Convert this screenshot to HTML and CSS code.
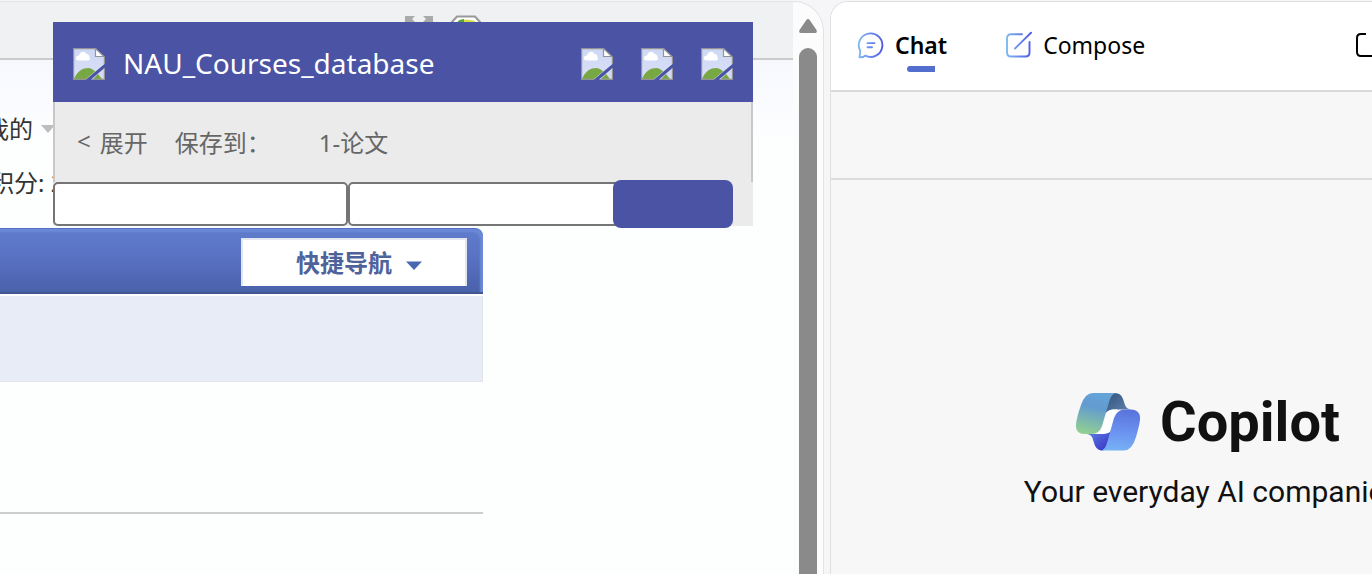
FILE: index.html
```html
<!DOCTYPE html>
<html lang="zh-CN">
<head>
<meta charset="utf-8">
<title>NAU_Courses_database</title>
<link rel="stylesheet" href="styles.css">
</head>
<body>
<svg class="defs" aria-hidden="true">
  <defs>
    <linearGradient id="sky" x1="0" y1="0" x2="0" y2="1"><stop offset="0" stop-color="#ccd8f4"/><stop offset="1" stop-color="#dcdff8"/></linearGradient>
    <linearGradient id="stroke" gradientUnits="userSpaceOnUse" x1="1" y1="0" x2="27" y2="0"><stop offset="0" stop-color="#81bdf0"/><stop offset="1" stop-color="#4f55e6"/></linearGradient>
    <symbol id="missing" viewBox="0 0 32 32">
      <path d="M.5.5H23L31.500 9V16L13 31.500H.5Z" fill="url(#sky)"/>
      <path d="M31.500 20V31.500H18Z" fill="#d6daf5"/>
      <path d="M5 12.500a2.500 2.500 0 0 1 1-5 4 4 0 0 1 7.500-1.500 3 3 0 0 1 3 3.500 1.800 1.800 0 0 1-1 3Z" fill="#fff"/>
      <path d="M1 31C4 23 10 20 15 20q4 0 7 3.500L13 31Z" fill="#78a843"/>
      <path d="M20 31l5-5 4 5Z" fill="#78a843"/>
      <path d="M22.500.8V8.500H31Z" fill="#fff"/>
      <path d="M13 31.400H.6V.6H22.500L31.400 9V16M22.500.6V8.500H31.400M31.400 20V31.400H20" fill="none" stroke="#949494" stroke-width="1.200"/>
    </symbol>
  </defs>
</svg>
<div class="window">
  <main class="browser">
    <div class="page">
      <header class="topbar">
        <svg class="top-icon" viewBox="0 0 30 30" aria-hidden="true"><path d="M1 1h10l-3 3 5 5-4 4-5-5-3 3ZM29 1H19l3 3-5 5 4 4 5-5 3 3Z" fill="#aaa"/></svg>
        <svg class="top-icon" viewBox="0 0 30 30" aria-hidden="true"><path d="M6 1.500H24L29 7V24H1V7Z" fill="#fff" stroke="#999" stroke-width="2"/><path d="M7 6Q15 3 24 6V12H7Z" fill="#d5e04a"/><path d="M7 6Q10 4 13 4V12H7Z" fill="#58a53c"/></svg>
      </header>
      <section class="account">
        <a class="account-link" href="#">我的 <svg class="mine-caret" viewBox="0 0 14 8" aria-hidden="true"><path d="M0 0H14L7 8Z" fill="#bdbdbd"/></svg></a>
        <p class="points">积分: 2</p>
      </section>
      <nav class="navbar">
        <button class="quick" type="button">快捷导航
          <svg class="quick-caret" viewBox="0 0 16 9" aria-hidden="true"><path d="M0 .5H16L8 9Z" fill="#4a68b0"/></svg>
        </button>
      </nav>
      <div class="subnav"></div>
      <hr class="divider">
      <section class="clipper">
        <header class="clipper-head">
          <svg class="missing" role="img" aria-label="Logo"><use href="#missing"/></svg>
          <h1 class="clipper-title">NAU_Courses_database</h1>
          <div class="clipper-actions">
            <button class="icon-button" type="button" aria-label="Settings"><svg class="missing"><use href="#missing"/></svg></button>
            <button class="icon-button" type="button" aria-label="Minimize"><svg class="missing"><use href="#missing"/></svg></button>
            <button class="icon-button" type="button" aria-label="Close"><svg class="missing"><use href="#missing"/></svg></button>
          </div>
        </header>
        <div class="clipper-path">
          <button class="expand" type="button"><span>&lt;</span><span>展开</span></button>
          <span class="save-to">保存到：</span>
          <span>1-论文</span>
        </div>
        <form class="clipper-form">
          <input class="field" type="text" aria-label="Title">
          <input class="field" type="text" aria-label="Tags">
          <button class="submit" type="button" aria-label="Save"></button>
        </form>
      </section>
    </div>
    <div class="scrollbar" aria-hidden="true">
      <svg class="scroll-arrow" viewBox="0 0 18 14"><path d="M7.400 1Q9-1 10.600 1L17.500 11Q18.500 14 16 14H2Q-.5 14 .5 11Z" fill="#8a8a8a"/></svg>
      <div class="thumb"></div>
    </div>
  </main>
  <aside class="sidebar">
    <nav class="tabs">
      <a class="tab tab-active" href="#">
        <svg class="tab-icon" viewBox="0 0 28 28" fill="none" stroke="url(#stroke)" stroke-width="1.900" stroke-linecap="round" stroke-linejoin="round" aria-hidden="true"><path d="M2.500 26.300 3.300 20A11.800 11.800 0 1 1 8.200 24.700Q6 26.500 2.500 26.300Z"/><path d="M10.500 12.100H17.500M10.500 16.200H15"/></svg>
        Chat
      </a>
      <a class="tab" href="#">
        <svg class="tab-icon" viewBox="0 0 28 28" fill="none" stroke="url(#stroke)" stroke-width="1.900" stroke-linecap="round" aria-hidden="true"><path d="M17 3.300H6Q2 3.300 2 7.300V21.500Q2 25.500 6 25.500H20.500Q24.500 25.500 24.500 21.500V11M10 17.500 26 1.700"/></svg>
        Compose
      </a>
      <a class="tab tab-last" href="#" aria-label="Insights">
        <svg class="tab-icon" viewBox="0 0 28 28" fill="none" stroke="#000" stroke-width="2" aria-hidden="true"><path d="M11 3H6Q2 3 2 7V21Q2 25 6 25H22Q26 25 26 21V7Q26 3 22 3H18"/></svg>
      </a>
    </nav>
    <div class="band"></div>
    <section class="welcome">
      <h2 class="brand">
        <svg class="brand-logo" viewBox="0 0 64 58" aria-hidden="true">
          <defs>
            <linearGradient id="la" x1=".6" y1="0" x2=".35" y2="1"><stop offset="0" stop-color="#65a4d9"/><stop offset=".35" stop-color="#629bd0"/><stop offset="1" stop-color="#91cf93"/></linearGradient>
            <linearGradient id="lb" x1=".5" y1="0" x2=".4" y2="1"><stop offset="0" stop-color="#5974db"/><stop offset=".6" stop-color="#6d96f2"/><stop offset="1" stop-color="#77b2f3"/></linearGradient>
            <linearGradient id="lc" x1="0" y1="0" x2="1" y2="1"><stop offset="0" stop-color="#33517a"/><stop offset="1" stop-color="#6085b2"/></linearGradient>
            <linearGradient id="ld" x1="0" y1="0" x2="1" y2="1"><stop offset="0" stop-color="#6284e3"/><stop offset="1" stop-color="#332cc4"/></linearGradient>
          </defs>
          <path d="M33 0H39Q45 0 47 6L49 12Q50.500 16 55 16.500H38Q33 16.500 31 19L29 20Z" fill="url(#lc)"/>
          <path d="M11 41H26Q31 41 34 38L36 39 31 53Q29 58 25 57.500 20 57 18 50L16.500 45Q15 41.500 11 41Z" fill="url(#ld)"/>
          <path d="M17 0H40Q35 1 33 9L26 33Q23 41 16 41H8Q-1 41 0 31 1 23 5 12 9 0 17 0Z" fill="url(#la)"/>
          <path d="M36 16.500H41.500L34 39Q31 41 22 41Q26 38 27 33L31 19Q33 17 36 16.500Z" fill="#fff"/>
          <path d="M49 16.500H55Q65 17 64 27 63 34 60 44 56 57.500 48 57.500H25Q29 57 31 50L38 25Q41 16.500 49 16.500Z" fill="url(#lb)"/>
        </svg>
        Copilot
      </h2>
      <p class="tagline">Your everyday AI companion</p>
    </section>
  </aside>
</div>
</body>
</html>
```
FILE: styles.css
```css
* { box-sizing: border-box; }
body {
  margin: 0;
  background: #f6f6f8;
  color: #333;
  font-family: "Noto Sans", "Noto Sans CJK SC", sans-serif;
  font-size: 24px;
  overflow: hidden;
}
button, input { font: inherit; color: inherit; margin: 0; }
a { color: inherit; text-decoration: none; }
h1, h2, p { margin: 0; font-weight: 400; }
.defs { position: absolute; width: 0; height: 0; }
.window {
  display: grid;
  grid-template-columns: minmax(0, 1fr) 542px;
  gap: 6px;
  height: 100vh;
  padding-top: 1px;
}
.browser {
  display: flex;
  border: 1px solid #e2e3e6;
  border-width: 1px 1px 0 0;
  border-top-right-radius: 30px;
  background: #fcfcfd;
  overflow: hidden;
}
.page {
  position: relative;
  flex: 1;
  min-width: 0;
  overflow: hidden;
  background: #fdfefe;
}
.topbar {
  display: flex;
  gap: 17px;
  height: 58px;
  padding: 13px 0 0 404px;
  border-bottom: 2px solid #cbcbcc;
  background: #f0f1f3;
}
.top-icon { width: 30px; height: 30px; }
.account {
  height: 168px;
  padding-top: 49px;
  background: linear-gradient(#f6f8fe, #fdfefe 80px);
  line-height: 40px;
}
.account-link {
  display: flex;
  align-items: center;
  gap: 8px;
  margin-left: -15px;
  white-space: nowrap;
}
.mine-caret { width: 14px; height: 8px; }
.points { margin-left: -10px; padding-top: 14px; }
.navbar {
  display: flex;
  justify-content: flex-end;
  width: 483px;
  padding: 10px 16px 6px 0;
  border-top: 1px solid #5272c4;
  border-bottom: 2px solid #42578e;
  border-top-right-radius: 8px;
  background: linear-gradient(#617ccc, #5a73c4 40%, #4a61ab);
  box-shadow: inset -3px 3px 2px #6c89d8;
}
.quick {
  display: flex;
  align-items: center;
  justify-content: center;
  gap: 14px;
  width: 226px;
  height: 48px;
  margin-top: -1px;
  padding: 0 0 4px 10px;
  border: 2px solid #e3e6ef;
  border-bottom: 0;
  background: #fff;
  color: #4f639b;
  font-weight: 700;
}
.quick-caret { width: 16px; height: 9px; margin-top: 8px; }
.subnav {
  width: 483px;
  height: 86px;
  margin-top: 2px;
  border: 1px solid #e2e5eb;
  border-width: 0 1px 1px 0;
  background: #e8ecf6;
}
.divider {
  width: 483px;
  height: 2px;
  margin: 130px 0 0;
  border: 0;
  background: #cccdcd;
}
.clipper {
  position: absolute;
  top: 20px;
  left: 53px;
  width: 700px;
  background: #ebebeb;
  color: #666;
}
.clipper-head {
  display: flex;
  align-items: center;
  height: 80px;
  padding: 4px 20px 0;
  background: #4a53a4;
  color: #fff;
}
.missing { display: block; width: 32px; height: 32px; }
.clipper-title {
  flex: 1;
  margin-left: 18px;
  padding-bottom: 2px;
  font-size: 28px;
  line-height: 40px;
}
.clipper-actions { display: flex; gap: 28px; }
.icon-button { padding: 0; border: 0; background: none; }
.clipper-path {
  display: flex;
  align-items: center;
  height: 80px;
  padding: 0 0 2px 22px;
  border: 2px solid #c8c8c8;
  border-width: 0 2px;
}
.expand { display: flex; gap: 9px; padding: 0; border: 0; background: none; }
.save-to { margin: 0 48px 0 27px; }
.clipper-form { display: flex; align-items: center; height: 44px; }
.field {
  flex: none;
  width: 295px;
  height: 44px;
  border: 2px solid #757575;
  border-radius: 5px;
  background: #fff;
}
.submit {
  position: relative;
  flex: none;
  width: 120px;
  height: 48px;
  margin-left: -30px;
  border: 0;
  border-radius: 8px;
  background: #4a53a4;
}
.scrollbar {
  flex: none;
  display: flex;
  flex-direction: column;
  align-items: center;
  gap: 14px;
  width: 30px;
  padding-top: 16px;
}
.scroll-arrow { flex: none; width: 18px; height: 16px; }
.thumb { flex: 1; width: 18px; border-radius: 9px 9px 0 0; background: #8a8a8a; }
.sidebar {
  display: flex;
  flex-direction: column;
  border: 1px solid #e0e0e1;
  border-width: 1px 0 0 1px;
  border-top-left-radius: 18px;
  background: #f7f7f7;
  overflow: hidden;
}
.tabs {
  display: flex;
  align-items: center;
  width: 754px;
  height: 90px;
  padding: 0 0 2px 26px;
  border-bottom: 2px solid #d9d9d9;
  background: #fff;
  color: #000;
  font-size: 23px;
}
.tab {
  position: relative;
  display: flex;
  align-items: center;
  gap: 10px;
  margin-right: 58px;
}
.tab-active { font-weight: 600; }
.tab-active::after {
  content: "";
  position: absolute;
  left: 50px;
  bottom: -11px;
  width: 28px;
  height: 6px;
  border-radius: 3px 0 0 3px;
  background: #526fce;
}
.tab-last { margin-left: 152px; }
.tab-icon { width: 28px; height: 28px; }
.band { height: 88px; border-bottom: 2px solid #dcdcdc; }
.welcome {
  width: 754px;
  padding-top: 208px;
  color: #111;
  font-family: Roboto, sans-serif;
  text-align: center;
}
.brand {
  display: flex;
  align-items: center;
  justify-content: center;
  gap: 20px;
  font-size: 56px;
  font-weight: 700;
  line-height: 68px;
}
.brand-logo { width: 64px; height: 58px; }
.tagline { padding: 16px 0 0 10px; font-size: 30px; line-height: 40px; }
```
